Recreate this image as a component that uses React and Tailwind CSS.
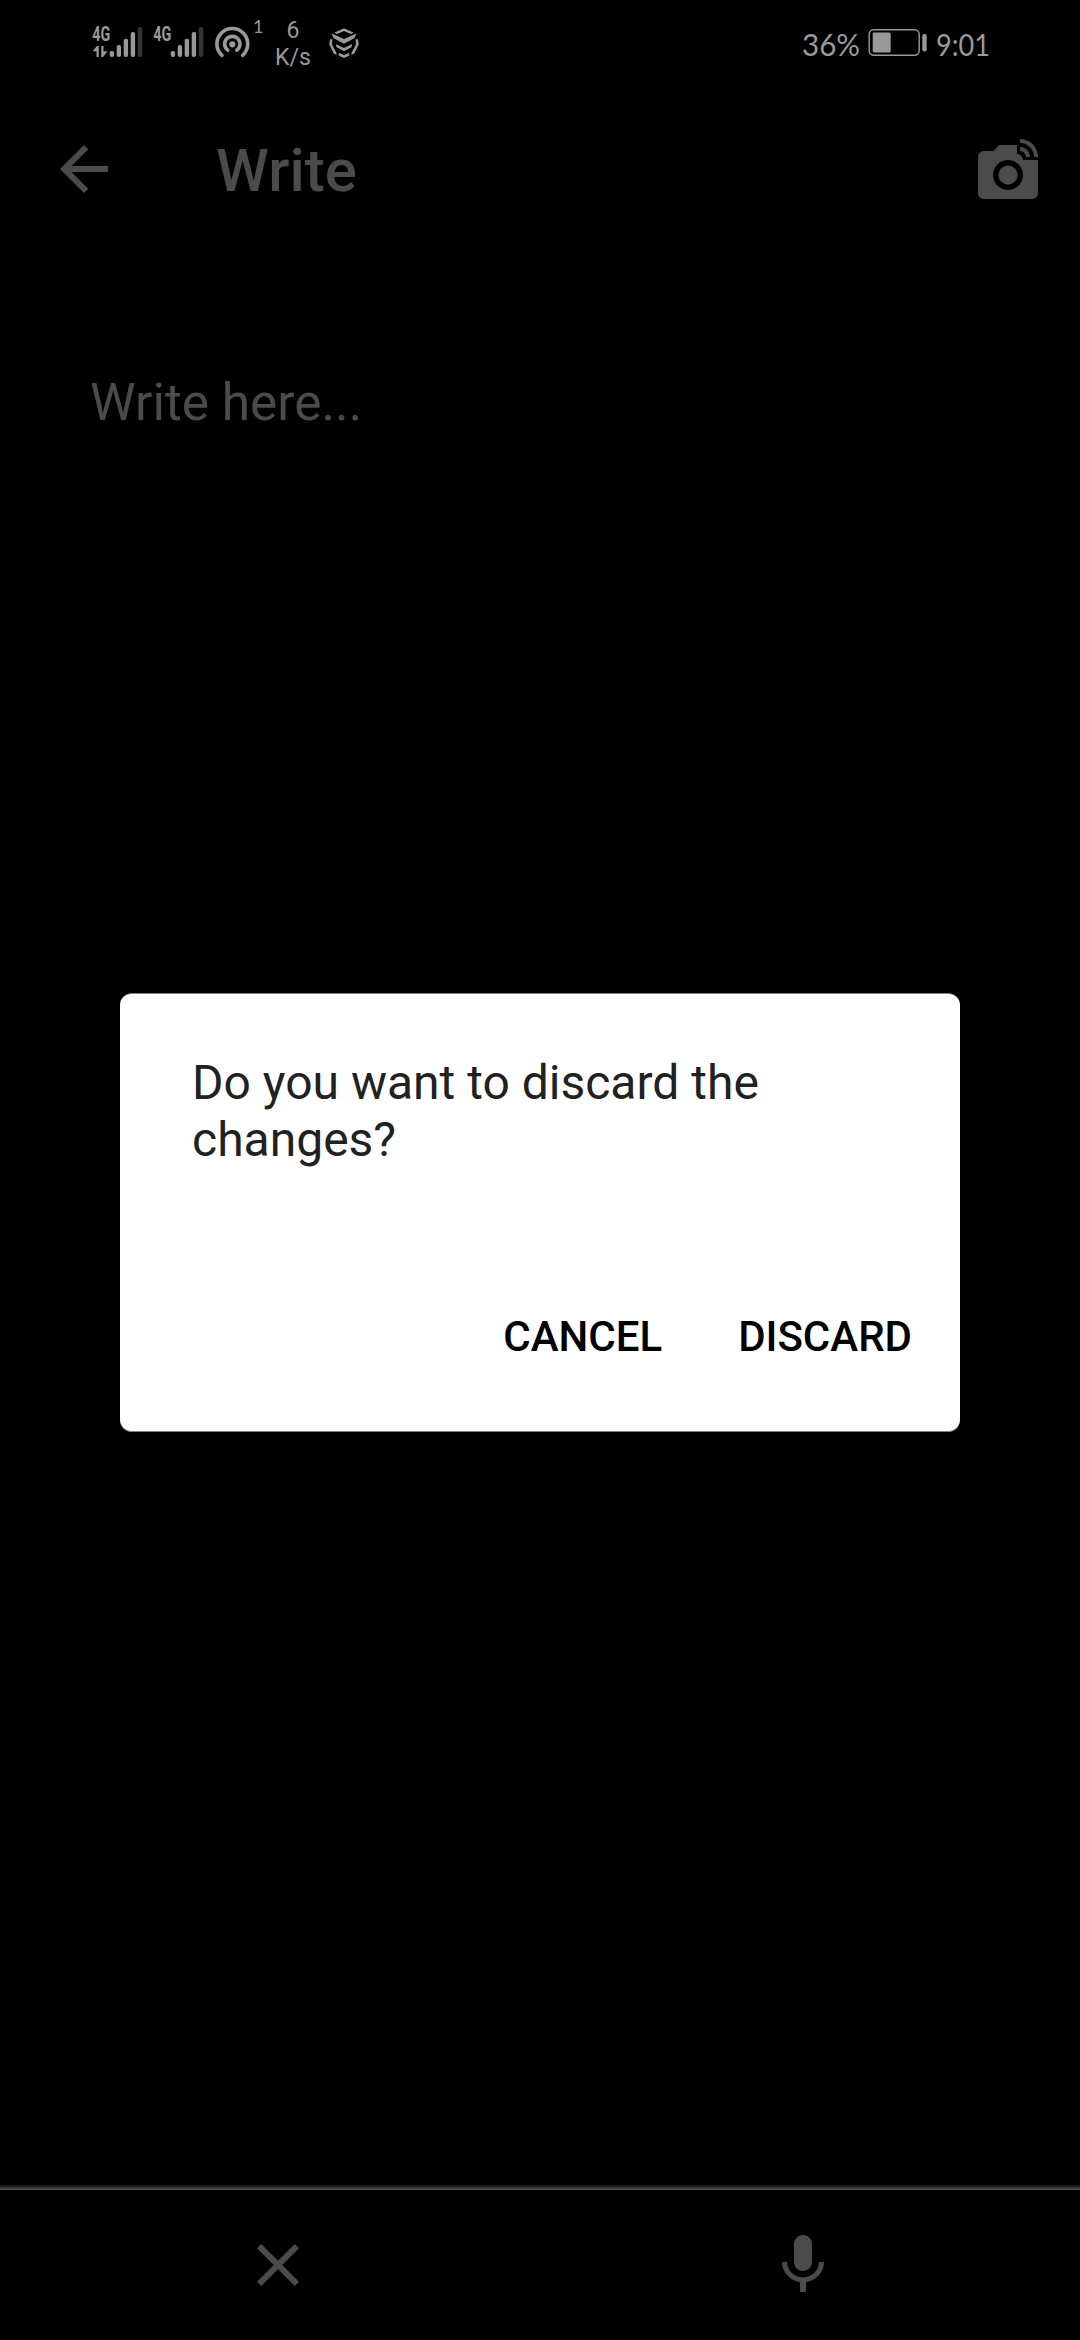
function SignalBars({ data }) {
  return (
    <svg className="mb-[4px] block h-[36px] w-[55px] shrink-0 overflow-visible" viewBox="0 0 55 36" fill="#999">
      <text x="2.3" y="16.8" fontFamily="Roboto" fontWeight="700" fontSize="20.5" textLength="18" lengthAdjust="spacingAndGlyphs">4G</text>
      {data && <path d="M2.5 27.2L7 22h1.8v11H6.5v-5.8zM11.3 22h2.2v5.6l4-.3-4.4 5.7h-1.8z" />}
      <rect x="19.7" y="27" width="4.4" height="6" rx="2" />
      <rect x="26.7" y="21" width="4.4" height="12" rx="2" />
      <rect x="33.7" y="14.7" width="4.4" height="18.3" rx="2" />
      <rect x="40.7" y="8" width="4.4" height="25" rx="2" />
      <rect x="47.7" y="3" width="4.6" height="30" rx="2" fill="#333" />
    </svg>
  );
}

function Hotspot() {
  return (
    <svg className="ml-[8px] block h-[36px] w-[36px] shrink-0" viewBox="214 26 36 36" fill="none" stroke="#999" strokeWidth="3.6" strokeLinecap="round">
      <circle cx="232.3" cy="44.3" r="3.1" fill="#999" stroke="none" />
      <path d="M227.8 50.1A7.6 7.6 0 1 1 236.8 50.1" />
      <path d="M222 55.4A15.4 15.4 0 1 1 242.6 55.4" />
    </svg>
  );
}

function CubeIcon() {
  return (
    <svg className="mb-[3px] ml-[16px] block h-[30px] w-[30px] shrink-0" viewBox="387.5 53 90 90" fill="#999">
      <path d="M403 67L432.5 54 462 67 453 71 432.5 62 412 71z" />
      <path d="M394 69L432.5 86 471 69 463 84 432.5 100 402 84z" />
      <path d="M408 101L432.5 113 457 101 455 111 432.5 123 410 111z" />
      <path d="M417 127L432.5 134 448 127V136L432.5 143 417 136z" />
      <path d="M391 85L397 88V104L410 127V133L402 130 388 102z" />
      <path d="M474 85L468 88V104L455 127V133L463 130 477 102z" />
    </svg>
  );
}

function StatusText({ width, children }) {
  return (
    <svg className="block h-[40px] shrink-0 overflow-visible" style={{ width }} fill="#999">
      <text x="0" y="31.5" fontFamily="Lato" fontSize="30.5" textLength={width} lengthAdjust="spacingAndGlyphs">{children}</text>
    </svg>
  );
}

function StatusBar() {
  return (
    <div className="flex h-[88px] items-center pr-[90px] pl-[90px] text-[#999]">
      <SignalBars data />
      <div className="w-[6px]" />
      <SignalBars />
      <Hotspot />
      <span className="mb-[36px] ml-[3px] w-[11px] font-[Lato] text-[18px] leading-[18px]">1</span>
      <div className="ml-[9px] w-[40px] text-center text-[23px] leading-[27px]">
        <div>6</div>
        <div>K/s</div>
      </div>
      <CubeIcon />
      <div className="ml-auto flex items-center">
        <StatusText width={58}>36%</StatusText>
        <svg className="mb-[5px] ml-[8px] block h-[30px] w-[60px] shrink-0" viewBox="0 0 60 30">
          <rect x="1.2" y="2.7" width="50" height="25.6" rx="4.5" fill="none" stroke="#999" strokeWidth="1.4" />
          <rect x="4.7" y="5.5" width="18" height="20" rx="1.5" fill="#999" />
          <rect x="54.3" y="7" width="4.4" height="17.5" rx="2" fill="#999" />
        </svg>
        <div className="ml-[8px]">
          <StatusText width={54}>9:01</StatusText>
        </div>
      </div>
    </div>
  );
}

function MaterialIcon({ children }) {
  return (
    <svg className="block size-[72px] shrink-0" viewBox="0 0 24 24" fill="#4b4b4b">
      {children}
    </svg>
  );
}

export default function App() {
  return (
    <div className="relative flex h-[2340px] w-[1080px] flex-col overflow-hidden bg-black font-[Roboto,sans-serif] text-[#4b4b4b]">
      <StatusBar />
      <header className="flex h-[162px] items-center pr-[36px] pl-[48px]">
        <MaterialIcon>
          <path d="M20 11H7.83l5.59-5.59L12 4l-8 8 8 8 1.41-1.41L7.83 13H20v-2z" />
        </MaterialIcon>
        <h1 className="mt-[4px] ml-[96px] flex-1 text-[60px] leading-[70px] font-medium">Write</h1>
        <MaterialIcon>
          <circle cx="12" cy="14" r="3.2" />
          <path d="M16 3.33c2.58 0 4.67 2.09 4.67 4.67H22c0-3.31-2.69-6-6-6v1.33M16 6c1.11 0 2 .89 2 2h1.33c0-1.84-1.49-3.33-3.33-3.33V6" />
          <path d="M17 9c0-1.11-.89-2-2-2V4H9L7.17 6H4c-1.1 0-2 .9-2 2v12c0 1.1.9 2 2 2h16c1.1 0 2-.9 2-2V9h-5zm-5 10c-2.76 0-5-2.24-5-5s2.24-5 5-5 5 2.24 5 5-2.24 5-5 5z" />
        </MaterialIcon>
      </header>
      <main className="flex-1 px-[90px] pt-[121px]">
        <p className="text-[51.4px] leading-[63px]">Write here...</p>
      </main>
      <div className="h-[9px] bg-linear-to-b from-black from-15% to-[#5a5a5a]" />
      <footer className="flex h-[150px] items-center">
        <div className="flex w-[555px] justify-center">
          <MaterialIcon>
            <path d="M19 6.41L17.59 5 12 10.59 6.41 5 5 6.41 10.59 12 5 17.59 6.41 19 12 13.41 17.59 19 19 17.59 13.41 12z" />
          </MaterialIcon>
        </div>
        <div className="flex w-[495px] justify-center">
          <MaterialIcon>
            <path d="M12 14c1.66 0 2.99-1.34 2.99-3L15 5c0-1.66-1.34-3-3-3S9 3.34 9 5v6c0 1.66 1.34 3 3 3zm5.3-3c0 3-2.54 5.1-5.3 5.1S6.7 14 6.7 11H5c0 3.41 2.72 6.23 6 6.72V21h2v-3.28c3.28-.48 6-3.3 6-6.72h-1.7z" />
          </MaterialIcon>
        </div>
      </footer>
      <div role="dialog" className="absolute top-[993px] left-[120px] flex h-[439px] w-[840px] flex-col justify-between rounded-[12px] border-y border-[#808080] bg-white pt-[60px] pr-[48px] pb-[70px] pl-[72px]">
        <p className="text-[48px] leading-[57px] text-[#212121]">Do you want to discard the changes?</p>
        <div className="flex justify-end gap-[76px] text-[42px] leading-[49px] font-medium text-black">
          <button>CANCEL</button>
          <button>DISCARD</button>
        </div>
      </div>
    </div>
  );
}
